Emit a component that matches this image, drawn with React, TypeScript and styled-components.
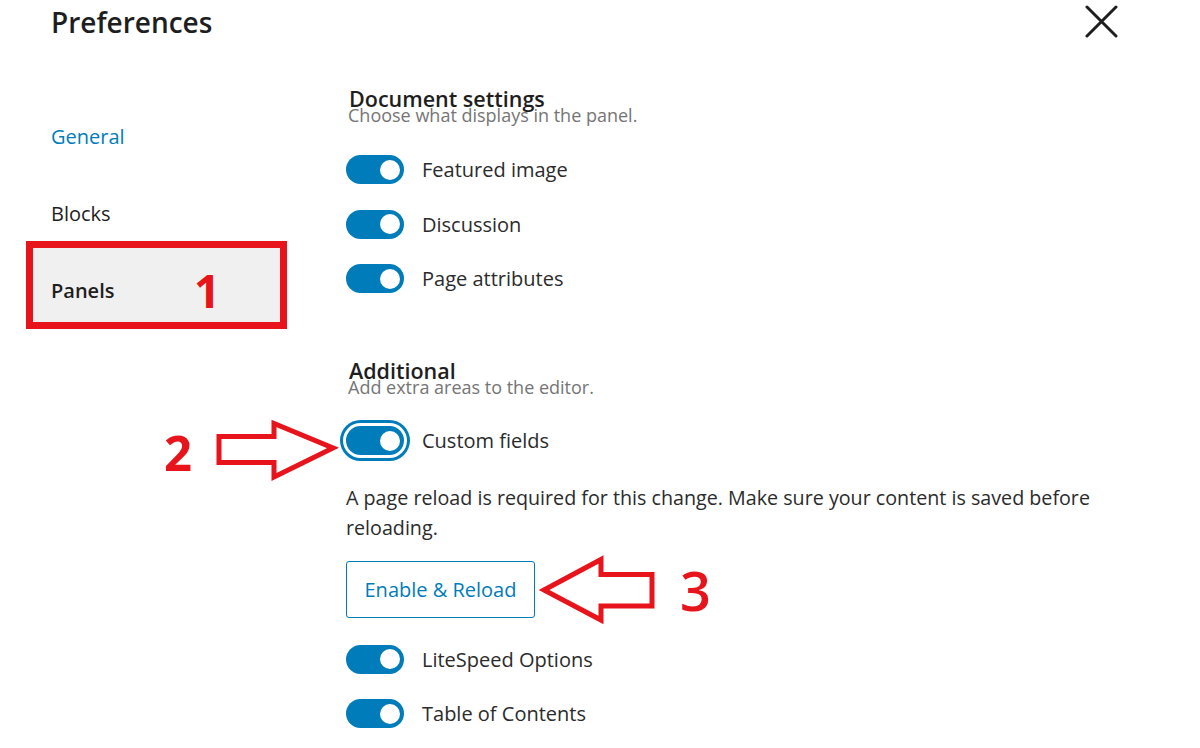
import styled, { createGlobalStyle } from "styled-components";

const GlobalStyle = createGlobalStyle`
  body {
    margin: 0;
    background: #ffffff;
    font-family: "Open Sans", "Noto Sans", sans-serif;
    color: #1e1e1e;
  }
`;

const BLUE = "#007cba";
const RED = "#e8141c";

const Page = styled.div`
  position: relative;
  width: 1200px;
  height: 748px;
  overflow: hidden;
  background: #ffffff;
`;

const Header = styled.header`
  height: 44px;
  display: flex;
  align-items: center;
  justify-content: space-between;
  padding: 0 82px 0 51px;
`;

const Title = styled.h1`
  margin: 0;
  font-size: 28px;
  line-height: 44px;
  font-weight: 600;
  color: #1e1e1e;
`;

const CloseButton = styled.button`
  width: 33px;
  height: 33px;
  padding: 0;
  border: 0;
  background: transparent;
  margin-top: -2px;
  display: flex;
  cursor: pointer;
`;

const Body = styled.div`
  display: flex;
`;

const Sidebar = styled.nav`
  width: 290px;
  flex-shrink: 0;
  padding: 54px 0 0 28px;
  box-sizing: border-box;
  display: flex;
  flex-direction: column;
`;

const Tab = styled.div<{ $active?: boolean; $selected?: boolean }>`
  width: 256px;
  height: 77px;
  box-sizing: border-box;
  padding-left: 23px;
  display: flex;
  align-items: center;
  font-size: 20px;
  font-weight: ${(p) => (p.$active ? 600 : 400)};
  color: ${(p) => (p.$selected ? BLUE : "#1e1e1e")};
  background: ${(p) => (p.$active ? "#f0f0f0" : "transparent")};
  ${(p) => (p.$active ? "margin-top: -5px; padding-top: 5px; height: 82px;" : "")}
`;

const Main = styled.main`
  flex: 1;
  padding: 45px 0 0 56px;
`;

const Section = styled.section<{ $gap?: number }>`
  margin-top: ${(p) => p.$gap ?? 0}px;
`;

const SectionTitle = styled.h2`
  margin: 0 0 0 3px;
  font-size: 21.5px;
  line-height: 20px;
  font-weight: 600;
  color: #1e1e1e;
`;

const SectionHint = styled.p`
  margin: -3px 0 0 2px;
  font-size: 18px;
  line-height: 18px;
  color: #757575;
`;

const ToggleList = styled.div<{ $top?: number }>`
  display: flex;
  flex-direction: column;
  gap: 25.5px;
  margin-top: ${(p) => p.$top ?? 31}px;
`;

const Row = styled.label`
  display: flex;
  align-items: center;
  gap: 18px;
  height: 29px;
  font-size: 20px;
  color: #2b2b2b;
`;

const Track = styled.span<{ $focused?: boolean }>`
  position: relative;
  width: 58px;
  height: 29px;
  border-radius: 15px;
  background: ${BLUE};
  flex-shrink: 0;
  box-shadow: ${(p) =>
    p.$focused ? `0 0 0 3px #ffffff, 0 0 0 6px ${BLUE}` : "none"};
`;

const Knob = styled.span`
  position: absolute;
  right: 4px;
  top: 4.5px;
  width: 20px;
  height: 20px;
  border-radius: 50%;
  background: #ffffff;
`;

const Notice = styled.p`
  margin: 28px 0 0 0;
  max-width: 760px;
  font-size: 19.7px;
  line-height: 30px;
  color: #2b2b2b;
`;

const OutlineButton = styled.button`
  margin-top: 18px;
  width: 189px;
  height: 57px;
  border: 1.5px solid ${BLUE};
  border-radius: 3px;
  background: #ffffff;
  color: ${BLUE};
  font-family: inherit;
  font-size: 20px;
  padding: 0;
  cursor: pointer;
`;

const AfterButton = styled.div`
  margin-top: 26.5px;
`;

/* red annotations drawn over the screenshot */
const Frame = styled.div`
  position: absolute;
  left: 26px;
  top: 241px;
  width: 261px;
  height: 88px;
  box-sizing: border-box;
  border: 7px solid ${RED};
  pointer-events: none;
`;

const Digit = styled.span<{ $x: number; $y: number; $size: number; $weight?: number }>`
  position: absolute;
  left: ${(p) => p.$x}px;
  top: ${(p) => p.$y}px;
  font-size: ${(p) => p.$size}px;
  line-height: 1;
  font-weight: ${(p) => p.$weight ?? 700};
  color: ${RED};
`;

const ArrowSvg = styled.svg<{ $x: number; $y: number }>`
  position: absolute;
  left: ${(p) => p.$x}px;
  top: ${(p) => p.$y}px;
  overflow: visible;
  pointer-events: none;
`;

function Toggle({ label, focused }: { label: string; focused?: boolean }) {
  return (
    <Row>
      <Track $focused={focused}>
        <Knob />
      </Track>
      {label}
    </Row>
  );
}

function Arrow({
  x,
  y,
  w,
  h,
  points,
}: {
  x: number;
  y: number;
  w: number;
  h: number;
  points: string;
}) {
  return (
    <ArrowSvg $x={x} $y={y} width={w} height={h} viewBox={`${x} ${y} ${w} ${h}`}>
      <polygon
        points={points}
        fill="none"
        stroke={RED}
        strokeWidth={5}
        strokeLinejoin="miter"
      />
    </ArrowSvg>
  );
}

export default function App() {
  return (
    <Page>
      <GlobalStyle />
      <Header>
        <Title>Preferences</Title>
        <CloseButton aria-label="Close">
          <svg width="33" height="33" viewBox="0 0 33 33">
            <path
              d="M2 2 L31 31 M31 2 L2 31"
              stroke="#1e1e1e"
              strokeWidth="3"
              strokeLinecap="round"
            />
          </svg>
        </CloseButton>
      </Header>
      <Body>
        <Sidebar>
          <Tab $selected>General</Tab>
          <Tab>Blocks</Tab>
          <Tab $active>Panels</Tab>
        </Sidebar>
        <Main>
          <Section>
            <SectionTitle>Document settings</SectionTitle>
            <SectionHint>Choose what displays in the panel.</SectionHint>
            <ToggleList>
              <Toggle label="Featured image" />
              <Toggle label="Discussion" />
              <Toggle label="Page attributes" />
            </ToggleList>
          </Section>
          <Section $gap={68}>
            <SectionTitle>Additional</SectionTitle>
            <SectionHint>Add extra areas to the editor.</SectionHint>
            <ToggleList $top={30}>
              <Toggle label="Custom fields" focused />
            </ToggleList>
            <Notice>
              A page reload is required for this change. Make sure your content
              is saved before reloading.
            </Notice>
            <OutlineButton>Enable &amp; Reload</OutlineButton>
            <AfterButton>
              <ToggleList $top={0}>
                <Toggle label="LiteSpeed Options" />
                <Toggle label="Table of Contents" />
              </ToggleList>
            </AfterButton>
          </Section>
        </Main>
      </Body>

      <Frame />
      <Digit $x={194} $y={267} $size={46}>
        1
      </Digit>
      <Digit $x={164} $y={428} $size={49}>
        2
      </Digit>
      <Digit $x={680} $y={563} $size={54} $weight={600}>
        3
      </Digit>
      <Arrow
        x={214}
        y={416}
        w={125}
        h={68}
        points="219,436.5 274,436.5 274,423.5 333,448 274,477 274,462.5 219,462.5"
      />
      <Arrow
        x={538}
        y={553}
        w={120}
        h={72}
        points="544,590 601,559.5 601,574.5 652,574.5 652,606 601,606 601,620"
      />
    </Page>
  );
}
